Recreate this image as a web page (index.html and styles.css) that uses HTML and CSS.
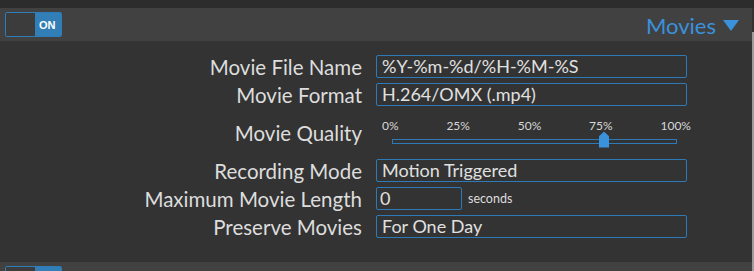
FILE: index.html
```html
<!DOCTYPE html>
<html lang="en">
<head>
  <meta charset="UTF-8">
  <title>Movies</title>
  <link rel="stylesheet" href="styles.css">
</head>
<body>

  <div class="top-strip"></div>

  <div class="section">
    <div class="section-header">
      <div class="toggle"><span class="toggle-off"></span><span class="toggle-on">ON</span></div>
      <div class="section-title">Movies <span class="arrow"></span></div>
    </div>

    <div class="section-body">
      <div class="row">
        <label>Movie File Name</label>
        <div class="field"><span class="input">%Y-%m-%d/%H-%M-%S</span></div>
      </div>
      <div class="row">
        <label>Movie Format</label>
        <div class="field"><span class="input">H.264/OMX (.mp4)</span></div>
      </div>
      <div class="row quality">
        <label>Movie Quality</label>
        <div class="field">
          <div class="slider">
            <div class="ticks">
              <span>0%</span><span>25%</span><span>50%</span><span>75%</span><span>100%</span>
            </div>
            <div class="track"><span class="thumb"></span></div>
          </div>
        </div>
      </div>
      <div class="row">
        <label>Recording Mode</label>
        <div class="field"><span class="input">Motion Triggered</span></div>
      </div>
      <div class="row">
        <label>Maximum Movie Length</label>
        <div class="field"><span class="input short">0</span><span class="unit">seconds</span></div>
      </div>
      <div class="row">
        <label>Preserve Movies</label>
        <div class="field"><span class="input">For One Day</span></div>
      </div>
    </div>
  </div>

  <div class="section-header next">
    <div class="toggle"><span class="toggle-off"></span><span class="toggle-on"></span></div>
  </div>

  <div class="scrollbar"></div>

</body>
</html>
```

FILE: styles.css
```css
* {
  box-sizing: border-box;
}
body {
  margin: 0;
  background-color: #333333;
  color: #dddddd;
  font-family: 'Lato', 'Liberation Sans', sans-serif;
  overflow: hidden;
  height: 271px;
}
.top-strip {
  height: 8px;
  background-color: #2c2c2c;
}
.section-header {
  height: 33px;
  background-color: #414141;
  display: flex;
  align-items: center;
  justify-content: space-between;
  padding: 0 13px 0 5px;
  margin-right: 2px;
}
.toggle {
  display: flex;
  width: 57px;
  height: 25px;
  border: 1px solid #2f7db8;
  border-radius: 2px;
  overflow: hidden;
}
.toggle-off {
  width: 29px;
  background-color: #3c3c3c;
}
.toggle-on {
  flex: 1;
  background-color: #317fb6;
  color: #ffffff;
  font-family: 'Liberation Sans', sans-serif;
  font-weight: bold;
  font-size: 11px;
  display: flex;
  align-items: center;
  padding-left: 4px;
}
.section-title {
  color: #3a91dc;
  font-size: 22px;
  display: flex;
  align-items: center;
  gap: 7px;
  padding-top: 1px;
}
.arrow {
  width: 0;
  height: 0;
  border-left: 8px solid transparent;
  border-right: 8px solid transparent;
  border-top: 11px solid #3a91dc;
}
.section-body {
  padding: 14px 0 24px 0;
  display: flex;
  flex-direction: column;
  gap: 5px;
}
.row {
  display: grid;
  grid-template-columns: 362px 1fr;
  column-gap: 14px;
  align-items: center;
}
.row label {
  text-align: right;
  font-size: 20.5px;
  line-height: 22px;
}
.field {
  display: flex;
  align-items: center;
}
.input {
  width: 311px;
  height: 23px;
  border: 1px solid #2e7ab8;
  border-radius: 2px;
  padding: 0 5px;
  font-size: 18px;
  line-height: 21px;
  color: #e0e0e0;
}
.input.short {
  width: 86px;
  padding: 0 3px;
}
.unit {
  font-size: 12.5px;
  margin-left: 6px;
  color: #dddddd;
}
.row.quality {
  height: 43px;
}
.slider {
  width: 315px;
  margin-top: -4px;
}
.ticks {
  display: flex;
  justify-content: space-between;
  font-size: 12px;
  padding: 0 0 0 6px;
  color: #d8d8d8;
  height: 14px;
}
.track {
  position: relative;
  margin: 7px 14px 0 16px;
  height: 5px;
  border: 1px solid #2e7ab8;
}
.thumb {
  position: absolute;
  left: 206px;
  top: -8px;
  width: 10px;
  height: 16px;
  background-color: #3a91dc;
  clip-path: polygon(50% 0, 100% 30%, 100% 100%, 0 100%, 0 30%);
}
.scrollbar {
  position: absolute;
  right: 0;
  top: 32px;
  width: 2px;
  height: 240px;
  background-color: #9c9c9c;
}
```
